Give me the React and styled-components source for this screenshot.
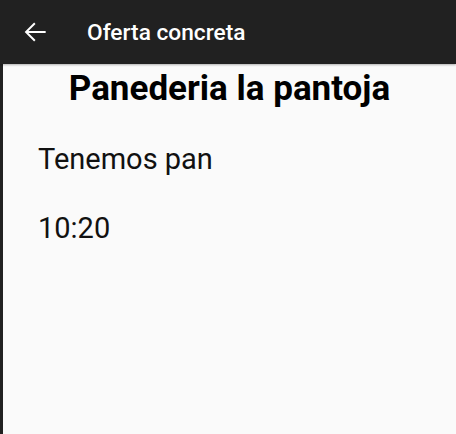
import React from 'react';
import styled, { createGlobalStyle } from 'styled-components';

const GlobalStyle = createGlobalStyle`
  html, body {
    margin: 0;
    padding: 0;
    background: #212121;
    font-family: Roboto, 'Noto Sans', sans-serif;
  }
`;

const Screen = styled.div`
  display: flex;
  flex-direction: column;
  width: 456px;
  height: 434px;
  background: #212121;
  overflow: hidden;
`;

const AppBar = styled.header`
  display: flex;
  align-items: center;
  height: 64px;
  flex-shrink: 0;
  padding-left: 19px;
  background: #212121;
  color: #fff;
  box-shadow: 0 1px 2px rgba(0, 0, 0, 0.3);
  position: relative;
  z-index: 1;
`;

const BackButton = styled.button`
  display: flex;
  align-items: center;
  justify-content: center;
  width: 32px;
  height: 32px;
  padding: 0;
  border: none;
  background: none;
  color: #fff;
`;

const Title = styled.h1`
  margin: 0 0 0 36px;
  font-size: 22.7px;
  font-weight: 500;
`;

const Body = styled.main`
  flex: 1;
  margin-left: 3px;
  background: #fafafa;
  color: #000;
`;

const ShopName = styled.h2`
  margin: 4px 0 0;
  text-align: center;
  font-size: 35px;
  line-height: 41px;
  font-weight: 700;
`;

const Line = styled.p`
  margin: ${(p) => p.$top}px 0 0 35px;
  font-size: 29px;
  line-height: 34px;
  font-weight: 400;
  color: #111;
`;

const ArrowBack = () => (
  <svg width="32" height="32" viewBox="0 0 24 24" fill="currentColor">
    <path d="M20 11.25H7.1l5.3-5.3-1.05-1.05L4.25 12l7.1 7.1 1.05-1.05-5.3-5.3H20z" />
  </svg>
);

export default function App() {
  return (
    <>
      <GlobalStyle />
      <Screen>
        <AppBar>
          <BackButton aria-label="Volver">
            <ArrowBack />
          </BackButton>
          <Title>Oferta concreta</Title>
        </AppBar>
        <Body>
          <ShopName>Panederia la pantoja</ShopName>
          <Line $top={33}>Tenemos pan</Line>
          <Line $top={35}>10:20</Line>
        </Body>
      </Screen>
    </>
  );
}
